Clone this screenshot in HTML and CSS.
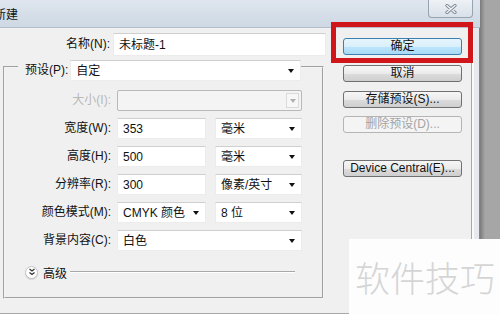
FILE: index.html
```html
<!DOCTYPE html>
<html lang="zh-CN">
<head>
    <meta charset="UTF-8">
    <meta name="viewport" content="width=device-width, initial-scale=1.0">
    <title>新建</title>
    <link rel="stylesheet" href="styles.css">
</head>
<body>
    <div class="screen">
        <div class="dialog">
            <div class="titlebar">
                <span class="title">新建</span>
                <div class="close-btn">
                    <svg width="12" height="10" viewBox="0 0 12 10">
                        <path d="M2 1.5 L10 8.5 M10 1.5 L2 8.5" stroke="#7d8894" stroke-width="3.2" stroke-linecap="round"/>
                        <path d="M2 1.5 L10 8.5 M10 1.5 L2 8.5" stroke="#f4f6f8" stroke-width="1.4" stroke-linecap="round"/>
                    </svg>
                </div>
            </div>

            <div class="body">
                <div class="form-panel">
                    <div class="name-row">
                        <span class="label">名称(N):</span>
                        <div class="input name-input">未标题-1</div>
                    </div>

                    <div class="group">
                        <div class="preset-row">
                            <span class="label">预设(P):</span>
                            <div class="select preset-select">自定<span class="arrow"></span></div>
                        </div>

                        <div class="fields">
                            <span class="label disabled">大小(I):</span>
                            <div class="select disabled-select wide"><span class="arrow-box"><span class="arrow"></span></span></div>

                            <span class="label">宽度(W):</span>
                            <div class="input">353</div>
                            <div class="select">毫米<span class="arrow"></span></div>

                            <span class="label">高度(H):</span>
                            <div class="input">500</div>
                            <div class="select">毫米<span class="arrow"></span></div>

                            <span class="label">分辨率(R):</span>
                            <div class="input">300</div>
                            <div class="select">像素/英寸<span class="arrow"></span></div>

                            <span class="label">颜色模式(M):</span>
                            <div class="select">CMYK 颜色<span class="arrow"></span></div>
                            <div class="select">8 位<span class="arrow"></span></div>

                            <span class="label">背景内容(C):</span>
                            <div class="select wide">白色<span class="arrow"></span></div>
                        </div>

                        <div class="advanced">
                            <span class="toggle">
                                <svg width="8" height="8" viewBox="0 0 8 8">
                                    <path d="M1.5 1 L4 3 L6.5 1 M1.5 4.5 L4 6.5 L6.5 4.5" stroke="#333" stroke-width="1.3" fill="none"/>
                                </svg>
                            </span>
                            <span class="advanced-text">高级</span>
                            <span class="rule"></span>
                        </div>
                    </div>
                </div>

                <div class="button-col">
                    <div class="btn default-btn">确定</div>
                    <div class="btn cancel-btn">取消</div>
                    <div class="btn save-btn">存储预设(S)...</div>
                    <div class="btn delete-btn disabled-btn">删除预设(D)...</div>
                    <div class="btn device-btn">Device Central(E)...</div>
                </div>

                <div class="frame-edge"></div>
            </div>
        </div>

        <div class="desk-strip"></div>

        <!-- annotation over the dialog -->
        <div class="highlight"></div>
        <div class="watermark">软件技巧</div>
    </div>
</body>
</html>
```

FILE: styles.css
```css
* {
    margin: 0;
    padding: 0;
    box-sizing: border-box;
}

body {
    width: 500px;
    height: 314px;
    overflow: hidden;
    font-family: "Liberation Sans", "Noto Sans CJK SC", sans-serif;
    font-size: 12px;
    color: #111;
    background: #a4a4a4;
}

.screen {
    position: relative;
    display: flex;
    height: 314px;
}

.dialog {
    width: 480px;
    display: flex;
    flex-direction: column;
    background: #f0f0f0;
    border-bottom: 1px solid #a8a8a8;
}

/* title bar */
.titlebar {
    height: 28px;
    display: flex;
    align-items: flex-start;
    justify-content: space-between;
    background: linear-gradient(#dfe6ee, #cdd8e3);
    border-bottom: 1px solid #b4bec9;
    padding-right: 7px;
}

.title {
    margin-left: -6px;
    margin-top: 5px;
    font-size: 12px;
    color: #111;
}

.close-btn {
    width: 45px;
    height: 18px;
    display: flex;
    align-items: center;
    justify-content: center;
    background: linear-gradient(#eef2f6, #d9e0e8);
    border: 1px solid #97a3b0;
    border-top: none;
    border-radius: 0 0 4px 4px;
}

/* body */
.body {
    flex: 1;
    display: flex;
}

.form-panel {
    width: 330px;
    padding-left: 3px;
}

.label {
    text-align: right;
    white-space: nowrap;
    line-height: 21px;
}

.label.disabled {
    color: #b8b8b8;
}

.input,
.select {
    height: 21px;
    line-height: 20px;
    padding-left: 5px;
    background: #fff;
    border: 1px solid #ececec;
    border-top-color: #cfcfcf;
    white-space: nowrap;
}

.select {
    position: relative;
    display: flex;
    align-items: center;
    justify-content: space-between;
    padding-right: 6px;
}

.arrow {
    width: 0;
    height: 0;
    border-left: 3.5px solid transparent;
    border-right: 3.5px solid transparent;
    border-top: 4px solid #111;
}

.name-row {
    display: flex;
    align-items: center;
    gap: 3px;
    margin-top: 5px;
    height: 23px;
}

.name-row .label {
    width: 107px;
}

.name-input {
    width: 213px;
    height: 23px;
    line-height: 22px;
}

/* grouped box */
.group {
    width: 321px;
    margin-top: 10px;
    border: 2px groove #f4f4f4;
    padding-bottom: 15px;
}

.preset-row {
    display: flex;
    align-items: center;
    gap: 2px;
    margin: -8px 0 0 13px;
    padding-left: 7px;
    width: 283px;
    background: #f0f0f0;
}

.preset-select {
    flex: 1;
}

.fields {
    display: grid;
    grid-template-columns: 105px 92px 92px;
    column-gap: 4px;
    row-gap: 7px;
    margin-top: 9px;
}

.fields .label {
    margin-right: -1px;
}

.fields .wide {
    grid-column: span 2;
}

.fields .input,
.fields .select {
    margin-left: 3px;
}

.fields .input + .select,
.fields .select + .select {
    margin-left: 5px;
}

.disabled-select {
    background: #f4f4f4;
    border: 1px solid #b8b8b8;
    border-radius: 2px;
    padding-right: 2px;
    justify-content: flex-end;
}

.arrow-box {
    width: 13px;
    height: 15px;
    display: flex;
    align-items: center;
    justify-content: center;
    border: 1px solid #dadada;
    background: #f7f7f7;
}

.arrow-box .arrow {
    border-top-color: #b0b0b0;
}

.advanced {
    display: flex;
    align-items: center;
    height: 20px;
    margin-top: 11px;
    padding-left: 20px;
}

.toggle {
    width: 13px;
    height: 13px;
    display: flex;
    align-items: center;
    justify-content: center;
    border-radius: 50%;
    background: #fff;
    border: 1px solid #c4c4c4;
    box-shadow: 0 1px 1px rgba(0, 0, 0, 0.12);
}

.advanced-text {
    margin-left: 5px;
}

.rule {
    margin-left: 3px;
    width: 225px;
    height: 2px;
    border-top: 1px solid #a8a8a8;
    border-bottom: 1px solid #fff;
}

/* buttons */
.button-col {
    width: 142px;
    display: flex;
    flex-direction: column;
    padding: 10px 0 0 13px;
    border-right: 1px solid #a8a8a8;
}

.btn {
    width: 119px;
    height: 17px;
    line-height: 15px;
    text-align: center;
    background: linear-gradient(#f6f6f6 0%, #ebebeb 50%, #dcdcdc 51%, #cfcfcf 100%);
    border: 1px solid #707070;
    border-radius: 3px;
    white-space: nowrap;
}

.default-btn {
    background: linear-gradient(#e6f5fc 0%, #d9f0fc 50%, #bee6fd 51%, #a7d9f5 100%);
    border-color: #3c7fb1;
}

.cancel-btn {
    margin-top: 10px;
}

.save-btn {
    margin-top: 9px;
}

.delete-btn {
    margin-top: 8px;
}

.disabled-btn {
    color: #a4a4a4;
    background: #f4f4f4;
    border-color: #b5b5b5;
}

.device-btn {
    margin-top: 27px;
}

.frame-edge {
    width: 8px;
    background: #e6e9ed;
    border-left: 2px solid #fafafa;
    border-right: 1px solid #7d8690;
}

.desk-strip {
    flex: 1;
    background: linear-gradient(to right, #7a7a7a, #a6a6a6 5px);
}

/* overlays */
.highlight {
    position: absolute;
    left: 331px;
    top: 22px;
    width: 142px;
    height: 41px;
    border: 5px solid #d0161b;
}

.watermark {
    position: absolute;
    left: 349px;
    top: 239px;
    right: 0;
    bottom: 0;
    padding-left: 6px;
    display: flex;
    align-items: center;
    background: #fdfdfd;
    color: #d5d5d5;
    font-family: "Noto Sans CJK SC", sans-serif;
    font-weight: 300;
    font-size: 35px;
}
```
